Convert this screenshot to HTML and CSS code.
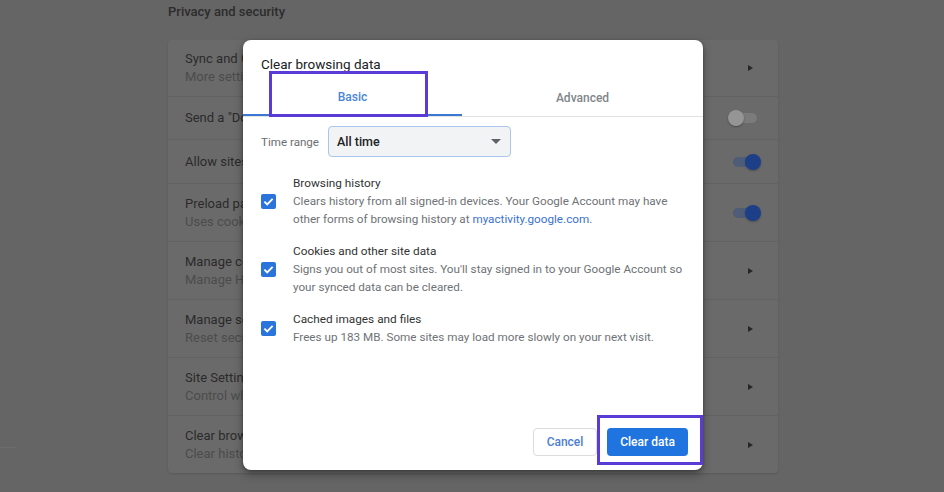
FILE: index.html
```html
<!DOCTYPE html>
<html>
<head>
<meta charset="utf-8">
<link rel="stylesheet" href="styles.css">
</head>
<body>
<div class="page">
  <div class="nav"><div class="nav-line"></div></div>
  <div class="main">
    <div class="section-title">Privacy and security</div>
    <div class="card">
      <div class="row first">
        <div class="row-text"><div class="row-title">Sync and Google services</div><div class="row-sub">More settings that relate to privacy, security, and data collection</div></div>
        <span class="chev"></span>
      </div>
      <div class="row single">
        <div class="row-text"><div class="row-title">Send a "Do Not Track" request with your browsing traffic</div></div>
        <span class="toggle off"><span class="knob"></span></span>
      </div>
      <div class="row single tall">
        <div class="row-text"><div class="row-title">Allow sites to check if you have payment methods saved</div></div>
        <span class="toggle on"><span class="knob"></span></span>
      </div>
      <div class="row">
        <div class="row-text"><div class="row-title">Preload pages for faster browsing and searching</div><div class="row-sub">Uses cookies to remember your preferences, even if you don't visit those pages</div></div>
        <span class="toggle on"><span class="knob"></span></span>
      </div>
      <div class="row">
        <div class="row-text"><div class="row-title">Manage certificates</div><div class="row-sub">Manage HTTPS/SSL certificates and settings</div></div>
        <span class="chev"></span>
      </div>
      <div class="row">
        <div class="row-text"><div class="row-title">Manage security keys</div><div class="row-sub">Reset security keys and create PINs</div></div>
        <span class="chev"></span>
      </div>
      <div class="row">
        <div class="row-text"><div class="row-title">Site Settings</div><div class="row-sub">Control what information websites can use and what content they can show you</div></div>
        <span class="chev"></span>
      </div>
      <div class="row">
        <div class="row-text"><div class="row-title">Clear browsing data</div><div class="row-sub">Clear history, cookies, cache, and more</div></div>
        <span class="chev"></span>
      </div>
    </div>
  </div>
</div>

<div class="dialog">
  <div class="dlg-title">Clear browsing data</div>
  <div class="tabs">
    <div class="tab active">Basic</div>
    <div class="tab">Advanced</div>
  </div>
  <div class="time-row">
    <span class="time-label">Time range</span>
    <div class="select"><span>All time</span><span class="caret"></span></div>
  </div>
  <div class="items">
    <div class="item">
      <span class="cb"><svg viewBox="0 0 16 16" width="15" height="15"><path d="M3.6 8.2l3 3 5.8-6" fill="none" stroke="#fff" stroke-width="2"/></svg></span>
      <div class="item-text">
        <div class="item-title">Browsing history</div>
        <div class="item-desc">Clears history from all signed-in devices. Your Google Account may have other forms of browsing history at <span class="link">myactivity.google.com</span>.</div>
      </div>
    </div>
    <div class="item">
      <span class="cb"><svg viewBox="0 0 16 16" width="15" height="15"><path d="M3.6 8.2l3 3 5.8-6" fill="none" stroke="#fff" stroke-width="2"/></svg></span>
      <div class="item-text">
        <div class="item-title">Cookies and other site data</div>
        <div class="item-desc">Signs you out of most sites. You'll stay signed in to your Google Account so your synced data can be cleared.</div>
      </div>
    </div>
    <div class="item">
      <span class="cb"><svg viewBox="0 0 16 16" width="15" height="15"><path d="M3.6 8.2l3 3 5.8-6" fill="none" stroke="#fff" stroke-width="2"/></svg></span>
      <div class="item-text">
        <div class="item-title">Cached images and files</div>
        <div class="item-desc">Frees up 183 MB. Some sites may load more slowly on your next visit.</div>
      </div>
    </div>
  </div>
  <div class="footer">
    <button class="btn cancel">Cancel</button>
    <button class="btn primary">Clear data</button>
  </div>
  <div class="mark mark-tab"></div>
  <div class="mark mark-btn"></div>
</div>
</body>
</html>
```

FILE: styles.css
```css
* { box-sizing: border-box; }
html, body { margin: 0; padding: 0; }
body {
  width: 944px;
  height: 492px;
  overflow: hidden;
  background: #656565;
  font-family: Roboto, "Liberation Sans", Arial, sans-serif;
  position: relative;
}
.page { display: flex; }
.nav { width: 168px; flex: none; }
.nav-line { margin-top: 447px; width: 16px; height: 1px; background: #6d6d6d; }
.main { width: 610px; flex: none; }
.section-title {
  padding-top: 2px;
  line-height: 20px;
  font-size: 13px;
  font-weight: 500;
  color: #2c2c2c;
}
.card {
  margin-top: 18px;
  background: #6a6a6a;
  border-radius: 4px;
  box-shadow: 0 1px 2px rgba(0,0,0,0.12);
}
.row {
  display: flex;
  align-items: center;
  height: 58px;
  padding: 0 16px 0 17px;
  border-top: 1px solid #626262;
}
.row.first { border-top: none; height: 56px; }
.row.single { height: 43px; }
.row.single.tall { height: 44px; }
.row-text { flex: 1; min-width: 0; max-width: 470px; overflow: hidden; white-space: nowrap; }
.row-title { font-size: 13px; line-height: 18px; color: #2a2a2a; }
.row-sub { font-size: 13px; line-height: 18px; color: #4c4c4c; }
.chev {
  margin-left: auto;
  margin-right: 9px;
  width: 0; height: 0;
  border-left: 5px solid #262626;
  border-top: 3.5px solid transparent;
  border-bottom: 3.5px solid transparent;
}
.toggle {
  margin-left: auto;
  position: relative;
  width: 34px; height: 16px;
  display: flex; align-items: center;
}
.toggle::before {
  content: "";
  display: block;
  width: 24px; height: 10px;
  border-radius: 5px;
  margin-left: 5px;
}
.toggle.off::before { background: #7b7b7b; }
.toggle.on::before { background: #4e5c78; }
.toggle .knob {
  position: absolute;
  top: 0;
  width: 16px; height: 16px;
  border-radius: 50%;
}
.toggle.off .knob { left: 0; background: #959595; box-shadow: 0 1px 2px rgba(0,0,0,0.3); }
.toggle.on .knob { left: 17px; background: #1c3f88; box-shadow: 0 1px 2px rgba(0,0,0,0.25); }

/* dialog */
.dialog {
  position: absolute;
  left: 243px;
  top: 40px;
  width: 460px;
  height: 430px;
  background: #fff;
  border-radius: 8px;
  box-shadow: 0 4px 10px rgba(0,0,0,0.35), 0 1px 3px rgba(0,0,0,0.25);
  display: flex;
  flex-direction: column;
}
.dlg-title {
  padding: 14px 18px 0;
  line-height: 20px;
  font-size: 13.5px;
  color: #202124;
}
.tabs {
  margin-top: 2px;
  display: flex;
  border-bottom: 1px solid #e2e2e2;
}
.tab {
  height: 40px;
  padding-top: 4px;
  display: flex;
  align-items: center;
  justify-content: center;
  font-size: 12px;
  font-weight: 500;
  color: #80868b;
}
.tab.active {
  width: 219px;
  color: #4a86d8;
  border-bottom: 2px solid #3a78d4;
  margin-bottom: -1px;
}
.tab:not(.active) { flex: 1; padding-top: 3px; }
.time-row {
  margin-top: 9px;
  padding-left: 18px;
  display: flex;
  align-items: center;
}
.time-label { font-size: 11.6px; color: #6b6e72; width: 67px; }
.select {
  width: 183px;
  height: 31px;
  background: #f1f3f4;
  border: 1.5px solid #aac6ea;
  border-radius: 4px;
  display: flex;
  align-items: center;
  padding: 0 8px;
  font-size: 12.5px;
  font-weight: 500;
  color: #202124;
}
.caret {
  margin-left: auto;
  margin-right: 1px;
  width: 0; height: 0;
  border-top: 5px solid #5f6368;
  border-left: 5px solid transparent;
  border-right: 5px solid transparent;
}
.items {
  margin-top: 17px;
  padding: 0 8px 0 18px;
  display: flex;
  flex-direction: column;
  gap: 14px;
}
.item { display: flex; align-items: center; }
.cb {
  flex: none;
  width: 15px; height: 15px;
  border-radius: 2px;
  background: #2a74dc;
  margin-right: 17px;
  display: flex;
}
.item-text { flex: 1; }
.item-title { font-size: 11.8px; line-height: 18px; color: #333; }
.item-desc { font-size: 11.7px; line-height: 18px; color: #6f7276; }
.link { color: #3a72cf; }
.footer {
  margin-top: auto;
  padding: 0 15px 14px;
  display: flex;
  justify-content: flex-end;
  gap: 10px;
}
.btn {
  height: 28px;
  border-radius: 4px;
  font-family: Roboto, "Liberation Sans", Arial, sans-serif;
  font-size: 12px;
  font-weight: 500;
  padding: 0;
  cursor: pointer;
}
.btn.cancel {
  width: 64px;
  background: #fff;
  border: 1px solid #dadce0;
  color: #4d7ed0;
}
.btn.primary {
  width: 81px;
  background: #1f74e0;
  border: none;
  color: #fff;
}
.mark {
  position: absolute;
  border: 3px solid #5a3bd6;
}
.mark-tab { left: 26px; top: 31px; width: 159px; height: 46px; }
.mark-btn { left: 354px; top: 375px; width: 106px; height: 50px; }
```
